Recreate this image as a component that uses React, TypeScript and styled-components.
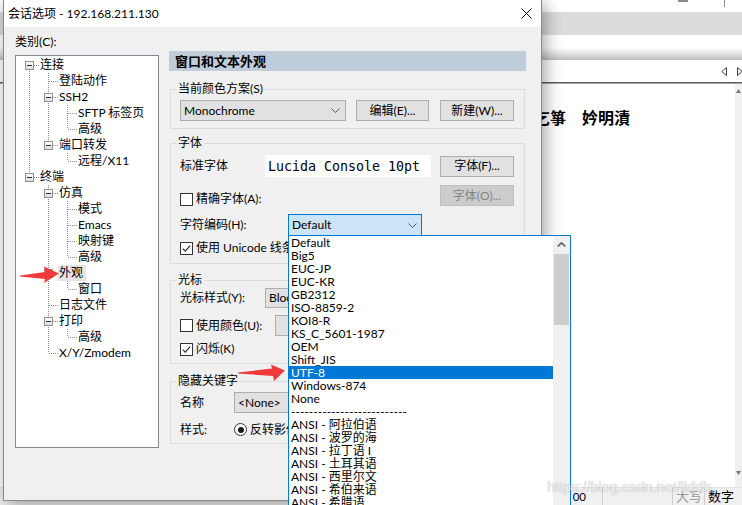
import React from "react";
import styled, { createGlobalStyle } from "styled-components";

const FONT = `Lato, "Noto Sans CJK SC", sans-serif`;

const GlobalStyle = createGlobalStyle`
  html, body { margin: 0; padding: 0; overflow: hidden; }
  body {
    width: 742px; height: 505px;
    font-family: ${FONT};
    font-size: 12px;
    color: #000;
    background: #fff;
  }
  #root { width: 742px; height: 505px; }
  *, *::before, *::after { box-sizing: border-box; }
`;

/* ---------------- background application ---------------- */
const Desktop = styled.div`
  position: relative;
  width: 742px;
  height: 505px;
  overflow: hidden;
  background: #fff;
`;

const AppWindow = styled.div`
  display: flex;
  flex-direction: column;
  width: 742px;
  height: 505px;
`;

const AppTop = styled.div`
  height: 12px;
  flex: none;
  display: flex;
  align-items: flex-start;
  gap: 36px;
  padding-left: 678px;
  background: #fff;
`;

const TopMark = styled.span<{ $w: number; $h: number }>`
  display: block;
  width: ${(p) => p.$w}px;
  height: ${(p) => p.$h}px;
  background: #8c8c8c;
`;

const TabBand = styled.div`
  height: 23px;
  flex: none;
  background: #dcdcdc;
`;

const WhiteBand = styled.div<{ $h: number }>`
  height: ${(p) => p.$h}px;
  flex: none;
  background: #fff;
`;

const ToolShadow = styled.div`
  height: 13px;
  flex: none;
  background: linear-gradient(to bottom, #ffffff 0%, #e6e6e6 45%, #bdbdbd 100%);
`;

const NavBand = styled.div`
  height: 22px;
  flex: none;
  display: flex;
  align-items: center;
  justify-content: flex-end;
  gap: 10px;
  background: #fff;
`;

const Divider = styled.div`
  height: 2px;
  flex: none;
  border-top: 1px solid #5c5c5c;
  border-bottom: 1px solid #a8a8a8;
`;

const Terminal = styled.div`
  flex: 1;
  display: flex;
  min-height: 0;
`;

const TermText = styled.div`
  flex: 1;
  padding: 24px 0 0 502px;
  font-family: "Noto Sans CJK SC", sans-serif;
  font-size: 16px;
  font-weight: 600;
  line-height: 18px;
  white-space: pre;
  background: #fff;
`;

const TermScroll = styled.div`
  width: 7px;
  flex: none;
  display: flex;
  flex-direction: column;
  justify-content: space-between;
  align-items: center;
  padding: 5px 0 12px;
  background: #f0f0f0;
`;

const StatusBar = styled.div`
  height: 18px;
  flex: none;
  display: flex;
  background: #f0f0f0;
  border-top: 1px solid #e2e2e2;
`;

const StatusFill = styled.div`
  flex: 1;
`;

const ModePane = styled.div`
  flex: none;
  width: 29px;
  display: flex;
  justify-content: flex-end;
  overflow: hidden;
  padding-right: 16px;
  font-size: 11.5px;
  line-height: 17px;
  white-space: nowrap;
`;

const StatusPane = styled.div<{ $w: number; $dim?: boolean }>`
  flex: none;
  width: ${(p) => p.$w}px;
  border-left: 1px solid #cfcfcf;
  font-size: 13px;
  line-height: 17px;
  padding-left: 3px;
  color: ${(p) => (p.$dim ? "#9a9a9a" : "#000")};
  white-space: nowrap;
  overflow: hidden;
`;

/* ---------------- dialog ---------------- */
const Dialog = styled.div`
  position: absolute;
  left: 3px;
  top: 0;
  width: 539px;
  height: 501px;
  display: flex;
  flex-direction: column;
  background: #f0f0f0;
  border: 1px solid #8a8a8a;
  border-top: 0;
  box-shadow: 3px 3px 16px rgba(0, 0, 0, 0.38);
`;

const TitleBar = styled.div`
  height: 27px;
  flex: none;
  display: flex;
  align-items: center;
  padding: 0 9px 0 4px;
  background: #fff;
`;

const TitleText = styled.div`
  flex: 1;
  font-size: 12px;
  line-height: 16px;
  white-space: nowrap;
`;

const Body = styled.div`
  flex: 1;
  display: flex;
  padding: 6px 0 0 11px;
`;

const LeftCol = styled.div`
  width: 144px;
  flex: none;
  display: flex;
  flex-direction: column;
`;

const CatLabel = styled.div`
  height: 16px;
  line-height: 18px;
  margin-bottom: 6px;
`;

const TreeBox = styled.div`
  height: 393px;
  background: #fff;
  border: 1px solid #828790;
  padding: 1px 0 0 4px;
  display: flex;
  flex-direction: column;
`;

const TreeRow = styled.div`
  height: 16px;
  flex: none;
  display: flex;
  align-items: center;
`;

const CellSvg = styled.svg`
  flex: none;
  display: block;
`;

const TreeLabel = styled.span<{ $sel?: boolean }>`
  height: 16px;
  line-height: 16px;
  padding: 0 3px 0 1px;
  white-space: nowrap;
  background: ${(p) => (p.$sel ? "#e5e5e5" : "transparent")};
`;

const RightCol = styled.div`
  width: 357px;
  flex: none;
  margin-left: 10px;
  padding-top: 18px;
  display: flex;
  flex-direction: column;
`;

const Header = styled.div`
  height: 20px;
  line-height: 20px;
  padding-left: 6px;
  background: #bfcddb;
  font-size: 13px;
  font-weight: 700;
`;

const Group = styled.fieldset<{ $mt: number }>`
  margin: ${(p) => p.$mt}px 1px 0 1px;
  padding: 0;
  border: 1px solid #dcdcdc;
  min-width: 0;
`;

const Legend = styled.legend`
  margin-left: 5px;
  padding: 0 2px;
  font-size: 12px;
  line-height: 16px;
`;

const GroupBody = styled.div<{ $pt: number; $pb: number }>`
  display: flex;
  flex-direction: column;
  padding: ${(p) => p.$pt}px 10px ${(p) => p.$pb}px 9px;
`;

const FormRow = styled.div<{ $h: number; $mt?: number; $end?: boolean }>`
  height: ${(p) => p.$h}px;
  margin-top: ${(p) => p.$mt ?? 0}px;
  display: flex;
  align-items: ${(p) => (p.$end ? "flex-end" : "center")};
  white-space: nowrap;
`;

const FieldLabel = styled.span<{ $w?: number }>`
  flex: none;
  width: ${(p) => (p.$w ? `${p.$w}px` : "auto")};
  line-height: 16px;
`;

const SelectBox = styled.div<{ $w: number }>`
  flex: none;
  width: ${(p) => p.$w}px;
  height: 100%;
  display: flex;
  align-items: center;
  justify-content: space-between;
  padding: 0 5px 0 3px;
  background: #e1e1e1;
  border: 1px solid #adadad;
  line-height: 16px;
`;

const OpenCombo = styled(SelectBox)`
  background: #cce4f7;
  border-color: #0078d7;
  padding-right: 4px;
`;

const Button = styled.div<{ $w: number; $disabled?: boolean; $ml?: number }>`
  flex: none;
  width: ${(p) => p.$w}px;
  height: 21px;
  margin-left: ${(p) => (p.$ml === undefined ? "auto" : `${p.$ml}px`)};
  display: flex;
  align-items: center;
  justify-content: center;
  background: ${(p) => (p.$disabled ? "#cccccc" : "#e1e1e1")};
  border: 1px solid ${(p) => (p.$disabled ? "#bfbfbf" : "#adadad")};
  color: ${(p) => (p.$disabled ? "#838383" : "#000")};
  line-height: 16px;
`;

const FontBox = styled.div`
  flex: none;
  width: 166px;
  height: 22px;
  display: flex;
  align-items: center;
  padding-left: 3px;
  background: #fff;
  font-family: "DejaVu Sans Mono", monospace;
  font-size: 13.3px;
`;

const CheckLine = styled.span<{ $w?: number }>`
  flex: none;
  width: ${(p) => (p.$w ? `${p.$w}px` : "auto")};
  height: 14px;
  display: flex;
  align-items: center;
  gap: 3px;
`;

const CheckBox = styled.span`
  flex: none;
  width: 13px;
  height: 13px;
  display: flex;
  align-items: center;
  justify-content: center;
  border: 1px solid #333;
  background: #fff;
`;

const RadioBox = styled.span`
  flex: none;
  width: 13px;
  height: 13px;
  display: flex;
  align-items: center;
  justify-content: center;
  border: 1px solid #333;
  border-radius: 50%;
  background: #fff;
  &::after {
    content: "";
    width: 6px;
    height: 6px;
    border-radius: 50%;
    background: #1a1a1a;
  }
`;

const ColorButton = styled.div`
  flex: none;
  width: 40px;
  height: 21px;
  background: #e1e1e1;
  border: 1px solid #adadad;
`;

/* ---------------- dropdown list (popup) ---------------- */
const DropList = styled.div`
  position: absolute;
  left: 288px;
  top: 235px;
  width: 283px;
  height: 280px;
  display: flex;
  background: #fff;
  border: 1px solid #0078d7;
`;

const ListItems = styled.div`
  flex: 1;
  display: flex;
  flex-direction: column;
`;

const ListItem = styled.div<{ $sel?: boolean }>`
  height: 13px;
  flex: none;
  line-height: 13px;
  padding-left: 2px;
  white-space: nowrap;
  font-size: 12px;
  background: ${(p) => (p.$sel ? "#0078d7" : "transparent")};
  color: ${(p) => (p.$sel ? "#fff" : "#000")};
`;

const ScrollBar = styled.div`
  width: 17px;
  flex: none;
  display: flex;
  flex-direction: column;
  background: #f0f0f0;
`;

const ScrollBtn = styled.div`
  height: 17px;
  flex: none;
  display: flex;
  align-items: center;
  justify-content: center;
`;

const Thumb = styled.div`
  height: 71px;
  flex: none;
  margin: 1px 1px 0;
  background: #cdcdcd;
`;

/* ---------------- overlays ---------------- */
const ArrowSvg = styled.svg<{ $x: number; $y: number }>`
  position: absolute;
  left: ${(p) => p.$x}px;
  top: ${(p) => p.$y}px;
  overflow: visible;
`;

const Watermark = styled.div`
  position: absolute;
  left: 547px;
  top: 478px;
  font-family: "Liberation Sans", sans-serif;
  font-size: 14.5px;
  line-height: 18px;
  color: rgba(255, 255, 255, 0.75);
  text-shadow: 0 0 1px rgba(0, 0, 0, 0.35);
  white-space: nowrap;
`;

/* ---------------- data ---------------- */
type Conn = "first" | "mid" | "last";
type Node = { label: string; guides: boolean[]; conn: Conn; exp?: boolean; sel?: boolean };

const tree: Node[] = [
  { label: "连接", guides: [], conn: "first", exp: true },
  { label: "登陆动作", guides: [true], conn: "mid" },
  { label: "SSH2", guides: [true], conn: "mid", exp: true },
  { label: "SFTP 标签页", guides: [true, true], conn: "mid" },
  { label: "高级", guides: [true, true], conn: "last" },
  { label: "端口转发", guides: [true], conn: "last", exp: true },
  { label: "远程/X11", guides: [true, false], conn: "last" },
  { label: "终端", guides: [], conn: "last", exp: true },
  { label: "仿真", guides: [false], conn: "mid", exp: true },
  { label: "模式", guides: [false, true], conn: "mid" },
  { label: "Emacs", guides: [false, true], conn: "mid" },
  { label: "映射键", guides: [false, true], conn: "mid" },
  { label: "高级", guides: [false, true], conn: "last" },
  { label: "外观", guides: [false], conn: "mid", exp: true, sel: true },
  { label: "窗口", guides: [false, true], conn: "last" },
  { label: "日志文件", guides: [false], conn: "mid" },
  { label: "打印", guides: [false], conn: "mid", exp: true },
  { label: "高级", guides: [false, true], conn: "last" },
  { label: "X/Y/Zmodem", guides: [false], conn: "last" },
];

const encodings = [
  "Default",
  "Big5",
  "EUC-JP",
  "EUC-KR",
  "GB2312",
  "ISO-8859-2",
  "KOI8-R",
  "KS_C_5601-1987",
  "OEM",
  "Shift_JIS",
  "UTF-8",
  "Windows-874",
  "None",
  "--------------------------",
  "ANSI - 阿拉伯语",
  "ANSI - 波罗的海",
  "ANSI - 拉丁语 I",
  "ANSI - 土耳其语",
  "ANSI - 西里尔文",
  "ANSI - 希伯来语",
  "ANSI - 希腊语",
  "ANSI - 越南语",
];

/* ---------------- small drawings ---------------- */
const DOT = { stroke: "#8f8f8f", strokeWidth: 1, strokeDasharray: "1 1" };

function GuideCell({ line }: { line: boolean }) {
  return (
    <CellSvg width={19} height={16}>
      {line && <line x1={9.5} y1={0} x2={9.5} y2={16} {...DOT} />}
    </CellSvg>
  );
}

function ConnCell({ conn, exp }: { conn: Conn; exp?: boolean }) {
  const y1 = conn === "first" ? 8 : 0;
  const y2 = conn === "last" ? 8 : 16;
  return (
    <CellSvg width={19} height={16}>
      <line x1={9.5} y1={y1} x2={9.5} y2={y2} {...DOT} />
      <line x1={10} y1={8.5} x2={19} y2={8.5} {...DOT} />
      {exp && (
        <g>
          <defs>
            <linearGradient id="expg" x1="0" y1="0" x2="0" y2="1">
              <stop offset="0" stopColor="#ffffff" />
              <stop offset="1" stopColor="#dcdcdc" />
            </linearGradient>
          </defs>
          <rect x={5.5} y={4.5} width={8} height={8} fill="url(#expg)" stroke="#919191" />
          <line x1={7} y1={8.5} x2={12} y2={8.5} stroke="#1f2a44" />
        </g>
      )}
    </CellSvg>
  );
}

const Chevron = () => (
  <svg width={9} height={5} viewBox="0 0 9 5">
    <polyline points="0.5,0.5 4.5,4.5 8.5,0.5" fill="none" stroke="#5a5a5a" strokeWidth={1} />
  </svg>
);

const Tick = () => (
  <svg width={11} height={11} viewBox="0 0 11 11">
    <polyline points="1.8,5.6 4.3,8.1 9.2,2.6" fill="none" stroke="#333" strokeWidth={1.3} />
  </svg>
);

function Check({ checked, children, w }: { checked?: boolean; children: React.ReactNode; w?: number }) {
  return (
    <CheckLine $w={w}>
      <CheckBox>{checked && <Tick />}</CheckBox>
      <FieldLabel>{children}</FieldLabel>
    </CheckLine>
  );
}

export default function App() {
  return (
    <>
      <GlobalStyle />
      <Desktop>
        <AppWindow>
          <AppTop>
            <TopMark $w={10} $h={2} />
            <TopMark $w={1} $h={7} />
          </AppTop>
          <TabBand />
          <WhiteBand $h={12} />
          <ToolShadow />
          <NavBand>
            <svg width={6} height={9} viewBox="0 0 6 9">
              <polygon points="5.5,0.5 0.8,4.5 5.5,8.5" fill="none" stroke="#444" />
            </svg>
            <svg width={5} height={9} viewBox="0 0 5 9">
              <polygon points="0.5,0.5 5,4.5 0.5,8.5" fill="none" stroke="#444" />
            </svg>
          </NavBand>
          <Divider />
          <Terminal>
            <TermText>{"涓枃乞箏　妗明漬"}</TermText>
            <TermScroll>
              <svg width={5} height={4} viewBox="0 0 5 4">
                <polygon points="2.5,0 5,4 0,4" fill="#777" />
              </svg>
              <svg width={5} height={4} viewBox="0 0 5 4">
                <polygon points="0,0 5,0 2.5,4" fill="#777" />
              </svg>
            </TermScroll>
          </Terminal>
          <StatusBar>
            <StatusFill />
            <ModePane>
              <span>VT100</span>
            </ModePane>
            <StatusPane $w={70} />
            <StatusPane $w={32} $dim>
              大写
            </StatusPane>
            <StatusPane $w={38}>数字</StatusPane>
          </StatusBar>
        </AppWindow>

        <Dialog>
          <TitleBar>
            <TitleText>会话选项 - 192.168.211.130</TitleText>
            <svg width={11} height={11} viewBox="0 0 11 11">
              <line x1={0.5} y1={0.5} x2={10.5} y2={10.5} stroke="#111" />
              <line x1={10.5} y1={0.5} x2={0.5} y2={10.5} stroke="#111" />
            </svg>
          </TitleBar>
          <Body>
            <LeftCol>
              <CatLabel>类别(C):</CatLabel>
              <TreeBox>
                {tree.map((n, i) => (
                  <TreeRow key={i}>
                    {n.guides.map((g, j) => (
                      <GuideCell key={j} line={g} />
                    ))}
                    <ConnCell conn={n.conn} exp={n.exp} />
                    <TreeLabel $sel={n.sel}>{n.label}</TreeLabel>
                  </TreeRow>
                ))}
              </TreeBox>
            </LeftCol>

            <RightCol>
              <Header>窗口和文本外观</Header>

              <Group $mt={10}>
                <Legend>当前颜色方案(S)</Legend>
                <GroupBody $pt={3} $pb={7}>
                  <FormRow $h={21}>
                    <SelectBox $w={166}>
                      <span>Monochrome</span>
                      <Chevron />
                    </SelectBox>
                    <Button $w={73} $ml={10}>
                      编辑(E)...
                    </Button>
                    <Button $w={74}>新建(W)...</Button>
                  </FormRow>
                </GroupBody>
              </Group>

              <Group $mt={6}>
                <Legend>字体</Legend>
                <GroupBody $pt={4} $pb={8}>
                  <FormRow $h={22}>
                    <FieldLabel $w={85}>标准字体</FieldLabel>
                    <FontBox>Lucida Console 10pt</FontBox>
                    <Button $w={74}>字体(F)...</Button>
                  </FormRow>
                  <FormRow $h={21} $mt={8} $end>
                    <Check>精确字体(A):</Check>
                    <Button $w={74} $disabled>
                      字体(O)...
                    </Button>
                  </FormRow>
                  <FormRow $h={22} $mt={8}>
                    <FieldLabel $w={108}>字符编码(H):</FieldLabel>
                    <OpenCombo $w={134}>
                      <span>Default</span>
                      <Chevron />
                    </OpenCombo>
                  </FormRow>
                  <FormRow $h={14} $mt={5}>
                    <Check checked>使用 Unicode 线条绘图字符(D)</Check>
                  </FormRow>
                </GroupBody>
              </Group>

              <Group $mt={8}>
                <Legend>光标</Legend>
                <GroupBody $pt={0} $pb={7}>
                  <FormRow $h={20}>
                    <FieldLabel $w={85}>光标样式(Y):</FieldLabel>
                    <SelectBox $w={150}>
                      <span>Block</span>
                      <Chevron />
                    </SelectBox>
                  </FormRow>
                  <FormRow $h={21} $mt={7}>
                    <Check w={95}>使用颜色(U):</Check>
                    <ColorButton />
                  </FormRow>
                  <FormRow $h={14} $mt={6}>
                    <Check checked>闪烁(K)</Check>
                  </FormRow>
                </GroupBody>
              </Group>

              <Group $mt={9}>
                <Legend>隐藏关键字</Legend>
                <GroupBody $pt={3} $pb={7}>
                  <FormRow $h={21}>
                    <FieldLabel $w={54}>名称</FieldLabel>
                    <SelectBox $w={150}>
                      <span>&lt;None&gt;</span>
                      <Chevron />
                    </SelectBox>
                  </FormRow>
                  <FormRow $h={13} $mt={10}>
                    <FieldLabel $w={54}>样式:</FieldLabel>
                    <CheckLine>
                      <RadioBox />
                      <FieldLabel>反转影像</FieldLabel>
                    </CheckLine>
                  </FormRow>
                </GroupBody>
              </Group>
            </RightCol>
          </Body>
        </Dialog>

        <DropList>
          <ListItems>
            {encodings.map((e, i) => (
              <ListItem key={i} $sel={e === "UTF-8"}>
                {e}
              </ListItem>
            ))}
          </ListItems>
          <ScrollBar>
            <ScrollBtn>
              <svg width={9} height={5} viewBox="0 0 9 5">
                <polyline points="0.8,4.4 4.5,0.9 8.2,4.4" fill="none" stroke="#606060" strokeWidth={1.6} />
              </svg>
            </ScrollBtn>
            <Thumb />
          </ScrollBar>
        </DropList>

        <ArrowSvg $x={18} $y={265} width={42} height={20} viewBox="0 0 42 20">
          <polygon points="2,10.5 27,7 26,1.5 41,8.5 26,18 27,14 2,11.5" fill="#ef3b3b" />
        </ArrowSvg>
        <ArrowSvg $x={236} $y={363} width={50} height={20} viewBox="0 0 50 20">
          <polygon points="2,9.5 36,5.5 35,1.5 49,7.5 38,18 37,13 2,10.5" fill="#ef3b3b" />
        </ArrowSvg>

        <Watermark>https://blog.csdn.net/lkfdb</Watermark>
      </Desktop>
    </>
  );
}
